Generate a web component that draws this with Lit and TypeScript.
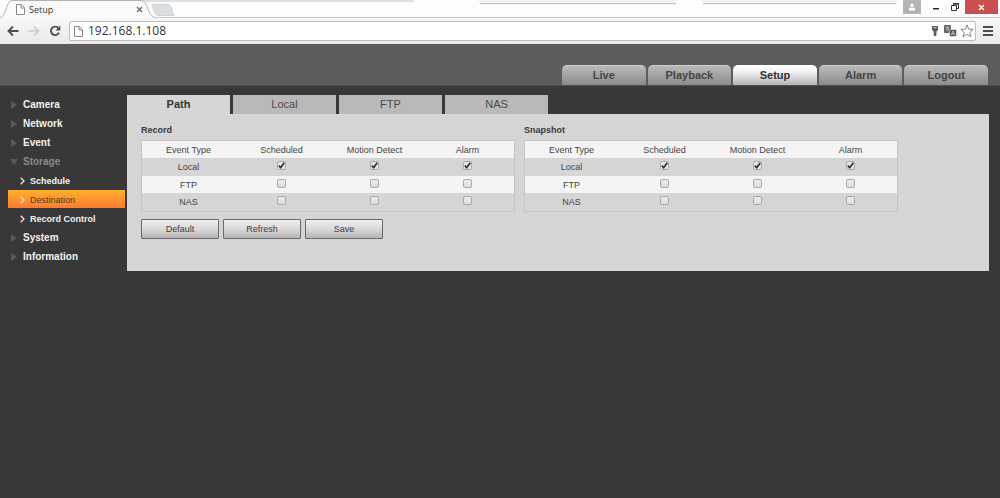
import { LitElement, html, css, svg, nothing } from "lit";
import { customElement, property, state } from "lit/decorators.js";
import { classMap } from "lit/directives/class-map.js";

const pageIcon = html`<svg width="9" height="11" viewBox="0 0 9 11" fill="#fff" stroke="#888">
  <path d="M.5 .5H5.300L8.500 3.700V10.500H.5Z"></path><path d="M5 .5V4H8.500" fill="none"></path>
</svg>`;

@customElement("browser-bar")
class BrowserBar extends LitElement {
  static styles = css`
    :host { display: block; background: #fdfdfd; font-family: "Open Sans", "Noto Sans", sans-serif; }
    svg { display: block; flex: none; }
    button { border: 0; padding: 0; background: none; font: inherit; display: flex; align-items: center; justify-content: center; }
    .strip { position: relative; display: flex; justify-content: space-between; height: 18px; box-sizing: border-box; border-bottom: 1px solid #c4c4c4; }
    .shadows { position: absolute; left: 0; top: 0; }
    .tab { position: relative; display: flex; align-items: center; width: 152px; height: 18px; padding: 1px 9px 0 16px; box-sizing: border-box; gap: 4px; font-size: 9px; line-height: 12px; color: #333; }
    .shape { position: absolute; left: 0; top: 0; }
    .tab > :not(.shape) { position: relative; }
    .title { flex: 1; }
    .window { position: relative; display: flex; height: 14px; padding-right: 2px; }
    .user { width: 18px; background: #b4b4b4; margin-right: 5px; }
    .mini { width: 19px; }
    .close { width: 33px; background: #c9504f; margin-left: 1px; }
    .tools { display: flex; align-items: center; height: 26px; box-sizing: border-box; padding: 0 7px; background: linear-gradient(#f8f8f8, #e9e9e9); }
    .nav { display: flex; gap: 9px; width: 62px; }
    .address { flex: 1; display: flex; align-items: center; height: 20px; box-sizing: border-box; border: 1px solid #bdbdbd; border-radius: 2px; background: #fff; padding: 0 1px 0 4px; gap: 5px; }
    input { flex: 1; min-width: 0; border: 0; padding: 0; background: none; outline: none; font: 12px/16px "Open Sans", "Noto Sans", sans-serif; color: #333; }
    .menu { margin-left: 7px; }
    .actions { display: flex; gap: 3px; }
  `;

  render() {
    return html`
      <div class="strip">
        <svg class="shadows" width="900" height="8" viewBox="0 0 900 8">
          <path d="M110 0H414V2H110Z" fill="#dedede"></path>
          <path d="M478 0H678L676 3H480Z" fill="#f3f3f3"></path>
          <path d="M480 3.5H676" stroke="#c6c6c6"></path>
          <path d="M480 4.5H676" stroke="#f0f0f0"></path>
          <path d="M701 0H898L896 3H703Z" fill="#f3f3f3"></path>
          <path d="M703 3.5H896" stroke="#c6c6c6"></path>
          <path d="M703 4.5H896" stroke="#f0f0f0"></path>
        </svg>
        <div class="tab">
          <svg class="shape" width="176" height="18" viewBox="0 0 176 18">
            <path d="M0 17.5C4 17 4 13 8 4Q9 .5 12 .5H141Q144 .5 146 4C149 11 150 17 155 17.5V18H0Z" fill="#f9f9f9"></path>
            <path d="M0 17.5C4 17 4 13 8 4Q9 .5 12 .5H141Q144 .5 146 4C149 11 150 17 155 17.5" fill="none" stroke="#b3b3b3"></path>
            <path d="M153 4.5H168Q170 4.5 171 7L174 15.5H159Q156 15.5 155 13L152 6Q151.500 4.500 153 4.500Z" fill="#d9dee1" stroke="#cfd3d6"></path>
          </svg>
          ${pageIcon}
          <span class="title">Setup</span>
          <button aria-label="Close tab">
            <svg width="7" height="7" viewBox="0 0 7 7"><path d="M1 1L6 6M6 1L1 6" stroke="#666" stroke-width="1.2"></path></svg>
          </button>
        </div>
        <div class="window">
          <button class="user" aria-label="Profile">
            <svg width="8" height="8" viewBox="0 0 8 8" fill="#fff"><circle cx="4" cy="2.300" r="1.800"></circle><path d="M1 7.500V6Q1 4.700 2.500 4.700H5.500Q7 4.700 7 6V7.500Z"></path></svg>
          </button>
          <button class="mini" aria-label="Minimize">
            <svg width="8" height="8" viewBox="0 0 8 8"><path d="M1 5H7V6.500H1Z" fill="#222"></path></svg>
          </button>
          <button class="mini" aria-label="Restore">
            <svg width="8" height="8" viewBox="0 0 8 8" fill="none" stroke="#333"><path d="M.5 2.500H5.500V7.500H.5Z"></path><path d="M2.500 2V.8H7.500V5.500H6"></path><path d="M2 .8H8" stroke-width="1.500"></path></svg>
          </button>
          <button class="close" aria-label="Close window">
            <svg width="7" height="7" viewBox="0 0 7 7"><path d="M1 1L6 6M6 1L1 6" stroke="#fff" stroke-width="1.400"></path></svg>
          </button>
        </div>
      </div>
      <div class="tools">
        <div class="nav">
          <button aria-label="Back">
            <svg width="12" height="12" viewBox="0 0 12 12" fill="none" stroke="#505050" stroke-width="1.900"><path d="M11.500 6H2M6 1.500L1.500 6L6 10.500"></path></svg>
          </button>
          <button aria-label="Forward">
            <svg width="12" height="12" viewBox="0 0 12 12" fill="none" stroke="#c8c8c8" stroke-width="1.700"><path d="M.5 6H10M6 1.500L10.500 6L6 10.500"></path></svg>
          </button>
          <button aria-label="Reload">
            <svg width="12" height="12" viewBox="0 0 12 12"><path d="M9.500 3.300A4.200 4.200 0 1 0 10 7.600" fill="none" stroke="#505050" stroke-width="1.900"></path><path d="M11.300 .6V5.400H6.500Z" fill="#505050"></path></svg>
          </button>
        </div>
        <div class="address">
          ${pageIcon}
          <input aria-label="Address" value="192.168.1.108" />
          <div class="actions">
            <button aria-label="Saved password">
              <svg width="12" height="12" viewBox="0 0 12 12" fill="#5a5a5a"><path d="M3 1H9V5L7.500 6.500V10L6 11.500L4.700 10.200V6.500L3 5Z"></path><path d="M4.500 2.200H7.500V3.200H4.500Z" fill="#ddd"></path></svg>
            </button>
            <button aria-label="Translate">
              <svg width="13" height="12" viewBox="0 0 13 12"><rect x="0" y="0" width="7" height="8" rx="1" fill="#666"></rect><path d="M1.500 2.300H5.500M3.500 1.300V2.300M2 5.500L4.800 3M2.200 3.300L5 5.500" stroke="#ddd" stroke-width=".7"></path><rect x="5.500" y="4.500" width="7" height="7" rx="1" fill="#5a5a5a" stroke="#fff" stroke-width=".5"></rect><path d="M7.300 10L9 6L10.700 10M7.800 8.800H10.200" fill="none" stroke="#ddd" stroke-width=".7"></path></svg>
            </button>
            <button aria-label="Bookmark">
              <svg width="14" height="14" viewBox="0 0 14 14"><path d="M7 1L8.700 5.100L13.200 5.500L9.800 8.400L10.900 12.800L7 10.400L3.100 12.800L4.200 8.400L.8 5.500L5.300 5.100Z" fill="#fff" stroke="#777" stroke-width=".9"></path></svg>
            </button>
          </div>
        </div>
        <button class="menu" aria-label="Menu">
          <svg width="10" height="10" viewBox="0 0 10 10" fill="#4c4c4c"><path d="M0 0H10V2H0ZM0 4H10V6H0ZM0 8H10V10H0Z"></path></svg>
        </button>
      </div>
    `;
  }
}

const columns = ["Scheduled", "Motion Detect", "Alarm"];
const targets = ["Local", "FTP", "NAS"];

@customElement("event-table")
class EventTable extends LitElement {
  @property() heading = "";

  static styles = css`
    :host { display: block; flex: 0 1 374px; min-width: 0; }
    h2 { margin: 0 0 4px; font-size: 9px; line-height: 12px; font-weight: bold; color: #3a3a3a; }
    table { width: 100%; table-layout: fixed; border-collapse: separate; border-spacing: 0; border: 1px solid #c6c6c6; font-size: 9px; line-height: 16px; color: #444; text-align: center; }
    th, td { padding: 0; font-weight: normal; height: 17px; vertical-align: middle; }
    .dark > * { height: 18px; }
    .light { background: #f4f4f4; }
    input { appearance: none; display: block; box-sizing: border-box; width: 9px; height: 9px; margin: 0 auto 3px; border: 1px solid #a9a9a9; border-radius: 2px; background: linear-gradient(#ececec, #dcdcdc); }
    input:checked { background: url("data:image/svg+xml,%3Csvg xmlns='http://www.w3.org/2000/svg' viewBox='0 0 7 7'%3E%3Cpath d='M.8 3.600L2.700 5.600L6.300 .8' fill='none' stroke='%23333' stroke-width='1.700'/%3E%3C/svg%3E") center / 7px 7px no-repeat #e6e6e6; }
  `;

  render() {
    return html`
      <h2 id="heading">${this.heading}</h2>
      <table aria-labelledby="heading">
        <thead>
          <tr class="light"><th scope="col">Event Type</th>${columns.map((c) => html`<th scope="col">${c}</th>`)}</tr>
        </thead>
        <tbody>
          ${targets.map((t, i) => html`
            <tr class=${i % 2 ? "light" : "dark"}>
              <th scope="row">${t}</th>
              ${columns.map((c) => html`<td><input type="checkbox" aria-label="${t} ${c}" ?checked=${i === 0} /></td>`)}
            </tr>`)}
        </tbody>
      </table>
    `;
  }
}

const menu = [
  { label: "Camera" },
  { label: "Network" },
  { label: "Event" },
  { label: "Storage", children: ["Schedule", "Destination", "Record Control"] },
  { label: "System" },
  { label: "Information" },
];

@customElement("app-root")
class AppRoot extends LitElement {
  @state() section = "Setup";
  @state() tab = "Path";

  static styles = css`
    :host { display: flex; flex-direction: column; min-height: 100vh; background: #383838; font-family: "Liberation Sans", Arial, sans-serif; }
    a { text-decoration: none; color: inherit; }
    button { font-family: inherit; padding: 0; border: 0; }
    svg { display: block; flex: none; }
    .header { display: flex; justify-content: flex-end; align-items: flex-end; height: 42px; box-sizing: border-box; padding: 0 12px; background: #5c5c5c; border-bottom: 1px solid #505050; }
    .sections { display: grid; grid-template-columns: repeat(5, 1fr); gap: 2px; width: 426px; }
    .section { display: block; height: 20px; box-sizing: border-box; border-top: 1px solid #cfcfcf; border-radius: 5px 5px 0 0; background: linear-gradient(#b9b9b9, #8c8c8c); text-align: center; font-size: 11px; line-height: 19px; font-weight: bold; color: #444; }
    .section.current { background: linear-gradient(#fff, #f2f2f2 30%, #b5b5b5); border-color: #fff; color: #333; }
    .body { display: grid; grid-template-columns: 117px minmax(0, 1fr); column-gap: 2px; padding: 9px 11px 0 8px; }
    .side { display: flex; flex-direction: column; gap: 1px; }
    .item { display: flex; align-items: center; height: 18px; gap: 5px; padding: 1px 0 0 2px; box-sizing: border-box; font-size: 10px; font-weight: bold; color: #f2f2f2; }
    .item.open { color: #8b8b8b; }
    .item svg { fill: #5a5a5a; }
    .sub { display: flex; align-items: center; height: 18px; gap: 5px; padding: 1px 0 0 12px; box-sizing: border-box; font-size: 9px; font-weight: bold; color: #f2f2f2; }
    .sub.current { background: linear-gradient(#ffb02b, #ff7b33); font-weight: normal; color: #5c3413; }
    .tabs { display: flex; gap: 3px; }
    .tab { width: 103px; height: 19px; background: #b9b9b9; font-size: 11px; line-height: 19px; color: #4a4a4a; text-align: center; }
    .tab.current { background: #d5d5d5; font-weight: bold; color: #333; }
    .panel { background: #d5d5d5; padding: 10px 14px 32px; }
    .tables { display: flex; gap: 9px; }
    .actions { display: flex; gap: 4px; margin-top: 7px; }
    .action { width: 78px; height: 20px; box-sizing: border-box; border: 1px solid #6a6a6a; border-radius: 1px; background: linear-gradient(#f0f0f0, #d9d9d9 50%, #b4b4b4); font-size: 9px; color: #3c3c3c; }
  `;

  render() {
    return html`
      <browser-bar></browser-bar>
      <header class="header">
        <nav class="sections">
          ${["Live", "Playback", "Setup", "Alarm", "Logout"].map((s) => html`
            <a href="#" class=${classMap({ section: true, current: s === this.section })}
              @click=${(e: Event) => { e.preventDefault(); this.section = s; }}>${s}</a>`)}
        </nav>
      </header>
      <div class="body">
        <nav class="side">
          ${menu.map((m) => html`
            <a href="#" class=${classMap({ item: true, open: !!m.children })}>
              <svg width="8" height="8" viewBox="0 0 8 8">
                ${m.children ? svg`<path d="M0 1H8L4 7Z"></path>` : svg`<path d="M1 0L7 4L1 8Z"></path>`}
              </svg>${m.label}</a>
            ${m.children?.map((c) => html`
              <a href="#" class=${classMap({ sub: true, current: c === "Destination" })}>
                <svg width="5" height="8" viewBox="0 0 5 8" fill="none" stroke="#f4e4d4" stroke-width="1.300"><path d="M.7 .8L4 4L.7 7.200"></path></svg>${c}</a>`) ?? nothing}
          `)}
        </nav>
        <main>
          <div class="tabs" role="tablist">
            ${["Path", "Local", "FTP", "NAS"].map((t) => html`
              <button role="tab" aria-selected=${t === this.tab ? "true" : "false"}
                class=${classMap({ tab: true, current: t === this.tab })}
                @click=${() => { this.tab = t; }}>${t}</button>`)}
          </div>
          <div class="panel">
            <div class="tables">
              <event-table heading="Record"></event-table>
              <event-table heading="Snapshot"></event-table>
            </div>
            <div class="actions">
              ${["Default", "Refresh", "Save"].map((b) => html`<button class="action">${b}</button>`)}
            </div>
          </div>
        </main>
      </div>
    `;
  }
}
